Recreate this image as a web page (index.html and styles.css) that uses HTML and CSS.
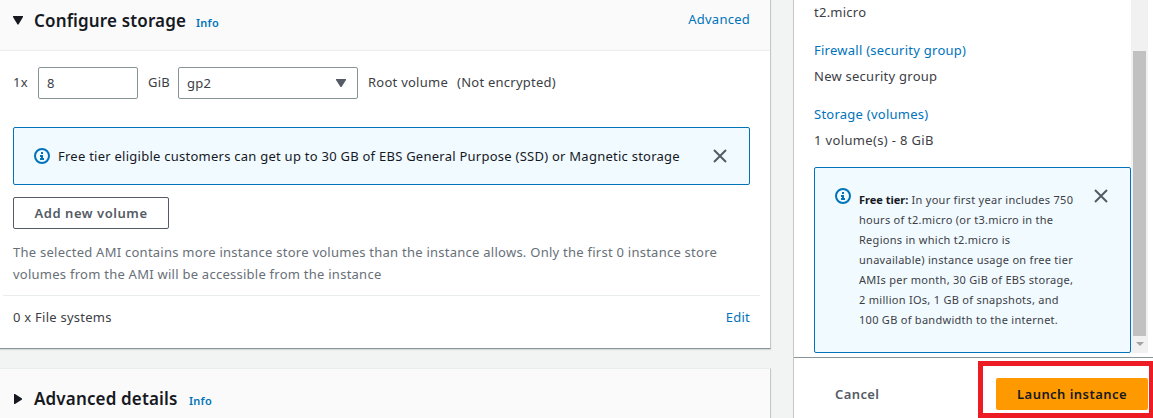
FILE: index.html
```html
<!DOCTYPE html>
<html lang="en">
<head>
<meta charset="utf-8">
<title>Launch an instance</title>
<link rel="stylesheet" href="styles.css">
</head>
<body>
<div class="page">
  <main class="main">
    <section class="panel">
      <header class="panel-header">
        <svg class="caret" width="10" height="9" viewBox="0 0 10 9"><path d="M0 0h10v1L5.5 8.5h-1L0 1z" fill="#16191f"/></svg>
        <h2 class="title title-storage">Configure storage</h2>
        <a class="info">Info</a>
        <a class="link advanced">Advanced</a>
      </header>
      <div class="volume-row">
        <span class="qty">1x</span>
        <span class="field size-field">8</span>
        <span class="unit">GiB</span>
        <span class="field type-field"><span>gp2</span>
          <svg width="10" height="8" viewBox="0 0 10 8"><path d="M0 0h10v1L5.5 8h-1L0 1z" fill="#545b64"/></svg>
        </span>
        <span class="root">Root volume</span>
        <span class="enc">(Not encrypted)</span>
      </div>
      <div class="alert alert-wide">
        <svg class="info-icon" width="16" height="16" viewBox="0 0 16 16"><circle cx="8" cy="8" r="7" fill="none" stroke="#0073bb" stroke-width="2"/><path d="M7 4h2v2H7zM6 7h3v3h1v2H6v-2h1V9H6z" fill="#0073bb"/></svg>
        <span class="alert-text">Free tier eligible customers can get up to 30 GB of EBS General Purpose (SSD) or Magnetic storage</span>
        <svg class="close" width="14" height="14" viewBox="0 0 14 14"><path d="M1 1l12 12M13 1L1 13" stroke="#545b64" stroke-width="2"/></svg>
      </div>
      <button class="button add">Add new volume</button>
      <p class="hint"><span class="hint-first">The selected AMI contains more instance store volumes than the instance allows. Only the first 0 instance store</span><br><span class="hint-second">volumes from the AMI will be accessible from the instance</span></p>
      <div class="fs-row"><span class="fs">0 x File systems</span><a class="link">Edit</a></div>
    </section>
    <section class="panel panel-details">
      <header class="panel-header header-details">
        <svg class="caret" width="10" height="10" viewBox="0 0 10 10"><path d="M1 0h1l7 4.5v1L2 10H1z" fill="#16191f"/></svg>
        <h2 class="title title-advanced">Advanced details</h2>
        <a class="info">Info</a>
      </header>
    </section>
  </main>
  <aside class="summary">
    <div class="scroll">
      <div class="summary-body">
        <div class="item micro">t2.micro</div>
        <a class="item link firewall">Firewall (security group)</a>
        <div class="item group">New security group</div>
        <a class="item link volumes">Storage (volumes)</a>
        <div class="item gib">1 volume(s) - 8 GiB</div>
        <div class="alert alert-tier">
          <svg class="info-icon" width="16" height="16" viewBox="0 0 16 16"><circle cx="8" cy="8" r="7" fill="none" stroke="#0073bb" stroke-width="2"/><path d="M7 4h2v2H7zM6 7h3v3h1v2H6v-2h1V9H6z" fill="#0073bb"/></svg>
          <p class="tier"><b>Free tier:</b> In your first year includes 750<br>hours of t2.micro (or t3.micro in the<br>Regions in which t2.micro is<br>unavailable) instance usage on free tier<br>AMIs per month, 30 GiB of EBS storage,<br>2 million IOs, 1 GB of snapshots, and<br>100 GB of bandwidth to the internet.</p>
          <svg class="close" width="14" height="14" viewBox="0 0 14 14"><path d="M1 1l12 12M13 1L1 13" stroke="#545b64" stroke-width="2"/></svg>
        </div>
      </div>
      <div class="scrollbar">
        <div class="thumb"></div>
        <svg class="arrow" width="8" height="4" viewBox="0 0 8 4"><path d="M0 0h8L4 4z" fill="#a3a3a3"/></svg>
      </div>
    </div>
    <footer class="actions">
      <button class="cancel">Cancel</button>
      <div class="highlight"><button class="launch">Launch instance</button></div>
    </footer>
  </aside>
</div>
</body>
</html>
```
FILE: styles.css
```css
* { box-sizing: border-box; }
body {
  margin: 0;
  background: #f2f3f3;
  color: #3c4046;
  font: 13px/22px "Noto Sans", sans-serif;
  letter-spacing: .25px;
  overflow: hidden;
}
.page { display: flex; height: 418px; white-space: nowrap; }
.main { width: 771px; }
.panel {
  height: 349px;
  background: #fff;
  border-right: 1px solid #c3c9c9;
  border-bottom: 1px solid #879596;
  box-shadow: 0 1px 1px #d5dbdb;
}
.panel-header {
  display: flex;
  align-items: center;
  height: 51px;
  padding: 0 20px 9px 13px;
  background: #fafafa;
  border-bottom: 1px solid #eaeded;
}
.caret { flex: none; }
.title {
  margin: 0 11px 0 11px;
  color: #16191f;
  font-size: 17px;
  font-weight: 600;
  letter-spacing: .15px;
}
.title-storage { width: 151px; }
.title-advanced { width: 144px; }
.info { color: #0073bb; font-size: 11px; font-weight: 600; padding-top: 4px; }
.link { color: #0073bb; }
.advanced { margin: 0 0 3px auto; }
.volume-row { display: flex; align-items: center; height: 32px; margin: 16px 0 28px 13px; }
.field {
  display: flex;
  align-items: center;
  justify-content: space-between;
  height: 32px;
  padding: 0 11px 0 8px;
  border: 1px solid #879596;
  border-radius: 2px;
}
.qty, .unit, .root, .enc { padding-bottom: 2px; }
.qty { width: 25px; }
.size-field { width: 100px; }
.unit { width: 40px; padding-left: 10px; }
.type-field { width: 180px; }
.root { width: 99px; padding-left: 10px; }
.alert { display: flex; background: #f1faff; border: 1px solid #0073bb; border-radius: 2px; }
.alert-wide { align-items: center; width: 737px; height: 58px; margin-left: 13px; padding: 0 22px 0 20px; color: #16191f; }
.info-icon { flex: none; margin-right: 8px; }
.close { flex: none; margin-left: auto; }
button { font: 600 13px/20px "Noto Sans", sans-serif; padding: 0; border: 0; color: #545b64; background: #fff; border-radius: 2px; }
.add { display: block; width: 156px; height: 32px; margin: 12px 0 0 13px; border: 1px solid #545b64; letter-spacing: .55px; }
.hint { margin: 12px 0 0 13px; color: #687078; }
.fs-row {
  display: flex;
  justify-content: space-between;
  margin: 10px 10px 0 3px;
  padding: 10px 10px 0 10px;
  border-top: 1px solid #eaeded;
}
.panel-details { height: 60px; margin-top: 19px; border-top: 1px solid #eaeded; }
.header-details { height: 60px; padding-bottom: 0; }
.summary { width: 360px; margin-left: 22px; background: #fff; border-left: 1px solid #c3c9c9; }
.scroll { display: flex; height: 353px; }
.summary-body { width: 317px; margin-left: 20px; }
.item { display: block; height: 22px; }
.micro { margin-top: 1px; }
.firewall { margin-top: 16px; }
.group { margin-top: 4px; }
.volumes { margin-top: 16px; }
.gib { margin-top: 4px; letter-spacing: .35px; }
.alert-tier { height: 186px; margin-top: 16px; padding: 20px 22px 0 20px; }
.tier { margin: 2px 0 0; font-size: 11px; line-height: 20px; letter-spacing: .28px; }
.tier b { color: #16191f; letter-spacing: 0; }
.alert-tier .close { margin-top: 1px; }
.scrollbar { width: 17px; padding: 51px 2px 0; background: #f1f1f1; }
.thumb { height: 285px; background: #c1c1c1; }
.arrow { display: block; margin: 6px auto 0; }
.actions { display: flex; height: 61px; margin-top: 4px; border-top: 1px solid #879596; }
.cancel { width: 44px; margin: 11px 0 0 41px; height: 50px; letter-spacing: .4px; }
.highlight {
  width: 175px;
  height: 57px;
  margin: 3px 0 0 99px;
  padding: 12px 0 0 13px;
  border: 5px solid #ed1c24;
  border-right-width: 4px;
  flex: none;
}
.launch { width: 152px; height: 32px; background: #ff9900; color: #16191f; letter-spacing: .45px; }
```
